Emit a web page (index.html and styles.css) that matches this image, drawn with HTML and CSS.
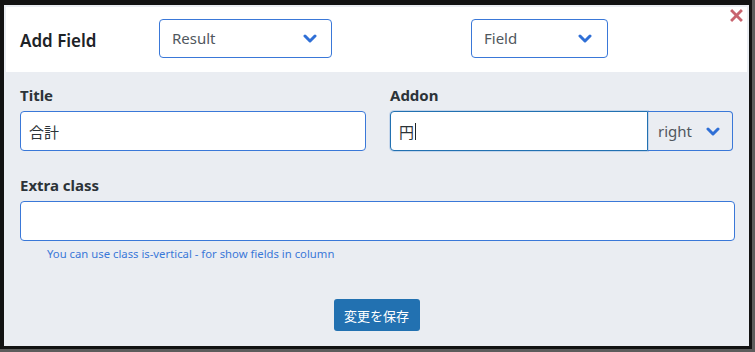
FILE: index.html
```html
<!DOCTYPE html>
<html lang="ja">
<head>
    <meta charset="UTF-8">
    <meta name="viewport" content="width=device-width, initial-scale=1.0">
    <title>Add Field</title>
    <link rel="stylesheet" href="styles.css">
</head>
<body>
    <div class="frame">
        <div class="modal">
            <div class="modal-header">
                <h2 class="modal-title">Add Field</h2>
                <div class="select select-type">
                    <span>Result</span>
                    <svg class="chevron" viewBox="0 0 14 9" width="14" height="9"><path d="M2 2l5 5 5-5"/></svg>
                </div>
                <div class="select select-kind">
                    <span>Field</span>
                    <svg class="chevron" viewBox="0 0 14 9" width="14" height="9"><path d="M2 2l5 5 5-5"/></svg>
                </div>
                <button class="close-btn" type="button" aria-label="close">
                    <svg viewBox="0 0 12 12" width="12" height="12"><path d="M1 1l10 10M11 1L1 11"/></svg>
                </button>
            </div>

            <div class="modal-body">
                <div class="row">
                    <div class="field">
                        <label class="field-label">Title</label>
                        <div class="input">合計</div>
                    </div>
                    <div class="field">
                        <label class="field-label">Addon</label>
                        <div class="addon-group">
                            <div class="input input-focus">円<span class="caret"></span></div>
                            <div class="addon-select">
                                <span>right</span>
                                <svg class="chevron" viewBox="0 0 14 9" width="14" height="9"><path d="M2 2l5 5 5-5"/></svg>
                            </div>
                        </div>
                    </div>
                </div>

                <div class="field field-wide">
                    <label class="field-label">Extra class</label>
                    <div class="input"></div>
                    <p class="hint">You can use class is-vertical - for show fields in column</p>
                </div>

                <div class="actions">
                    <button class="save-btn" type="button">変更を保存</button>
                </div>
            </div>
        </div>
    </div>
</body>
</html>
```

FILE: styles.css
```css
body {
    margin: 0;
    background-color: #5c5c5c;
    font-family: "Noto Sans", "Noto Sans CJK JP", sans-serif;
    color: #2c3338;
}
.frame {
    width: 748px;
    height: 344px;
    padding: 5px 0 0 4px;
    background-color: #121212;
}
.modal {
    width: 741px;
    height: 337px;
    border: 2px solid #eaedf2;
    background-color: #eaedf2;
    display: flex;
    flex-direction: column;
}
.modal-header {
    position: relative;
    height: 65px;
    background-color: #fff;
    display: flex;
    align-items: center;
    padding-left: 14px;
}
.modal-title {
    margin: 0;
    width: 139px;
    font-size: 17px;
    font-weight: 600;
    color: #1d2327;
    position: relative;
    top: 1px;
}
.select {
    box-sizing: border-box;
    height: 39px;
    border: 1px solid #3a78d8;
    border-radius: 4px;
    display: flex;
    align-items: center;
    justify-content: space-between;
    padding: 0 14px 0 12px;
    font-size: 15px;
    color: #50575e;
    margin-top: -3px;
}
.select-type {
    width: 173px;
    margin-right: 139px;
}
.select-kind {
    width: 137px;
    padding-right: 15px;
}
.chevron {
    fill: none;
    stroke: #2f6fd6;
    stroke-width: 3;
    stroke-linecap: round;
    stroke-linejoin: round;
}
.close-btn {
    position: absolute;
    top: 2px;
    right: 4px;
    border: none;
    background: none;
    padding: 0;
    width: 13px;
    height: 13px;
}
.close-btn svg {
    display: block;
    width: 13px;
    height: 13px;
    fill: none;
    stroke: #c8646f;
    stroke-width: 2.6;
}
.modal-body {
    flex: 1;
    padding: 13px 12px 0 14px;
}
.row {
    display: grid;
    grid-template-columns: 346px 343px;
    column-gap: 24px;
}
.field-label {
    display: block;
    font-size: 15px;
    font-weight: 700;
    line-height: 20px;
    margin-bottom: 6px;
}
.input {
    box-sizing: border-box;
    height: 40px;
    background-color: #fff;
    border: 1px solid #3a78d8;
    border-radius: 4px;
    padding: 0 8px;
    display: flex;
    align-items: center;
    font-size: 15px;
    color: #2c3338;
}
.addon-group {
    display: flex;
}
.addon-group .input {
    flex: 1;
    border-radius: 4px 0 0 4px;
}
.input-focus {
    border-color: #2271b1;
    box-shadow: 0 0 0 1px #c5d5ea;
}
.caret {
    display: inline-block;
    width: 1px;
    height: 17px;
    background-color: #1d2327;
    margin-left: 1px;
}
.addon-select {
    box-sizing: border-box;
    width: 85px;
    height: 40px;
    border: 1px solid #3a78d8;
    border-left: none;
    border-radius: 0 4px 4px 0;
    display: flex;
    align-items: center;
    justify-content: space-between;
    padding: 0 12px 0 10px;
    font-size: 15px;
    color: #50575e;
}
.field-wide {
    margin-top: 24px;
    width: 715px;
}
.hint {
    margin: 5px 0 0 27px;
    font-size: 11.3px;
    color: #3a78d8;
}
.actions {
    display: flex;
    justify-content: center;
    margin-top: 38px;
    padding-right: 2px;
}
.save-btn {
    width: 86px;
    height: 32px;
    border: none;
    border-radius: 3px;
    background-color: #2271b1;
    color: #fff;
    font-family: "Noto Sans CJK JP", sans-serif;
    font-size: 13px;
}
```
